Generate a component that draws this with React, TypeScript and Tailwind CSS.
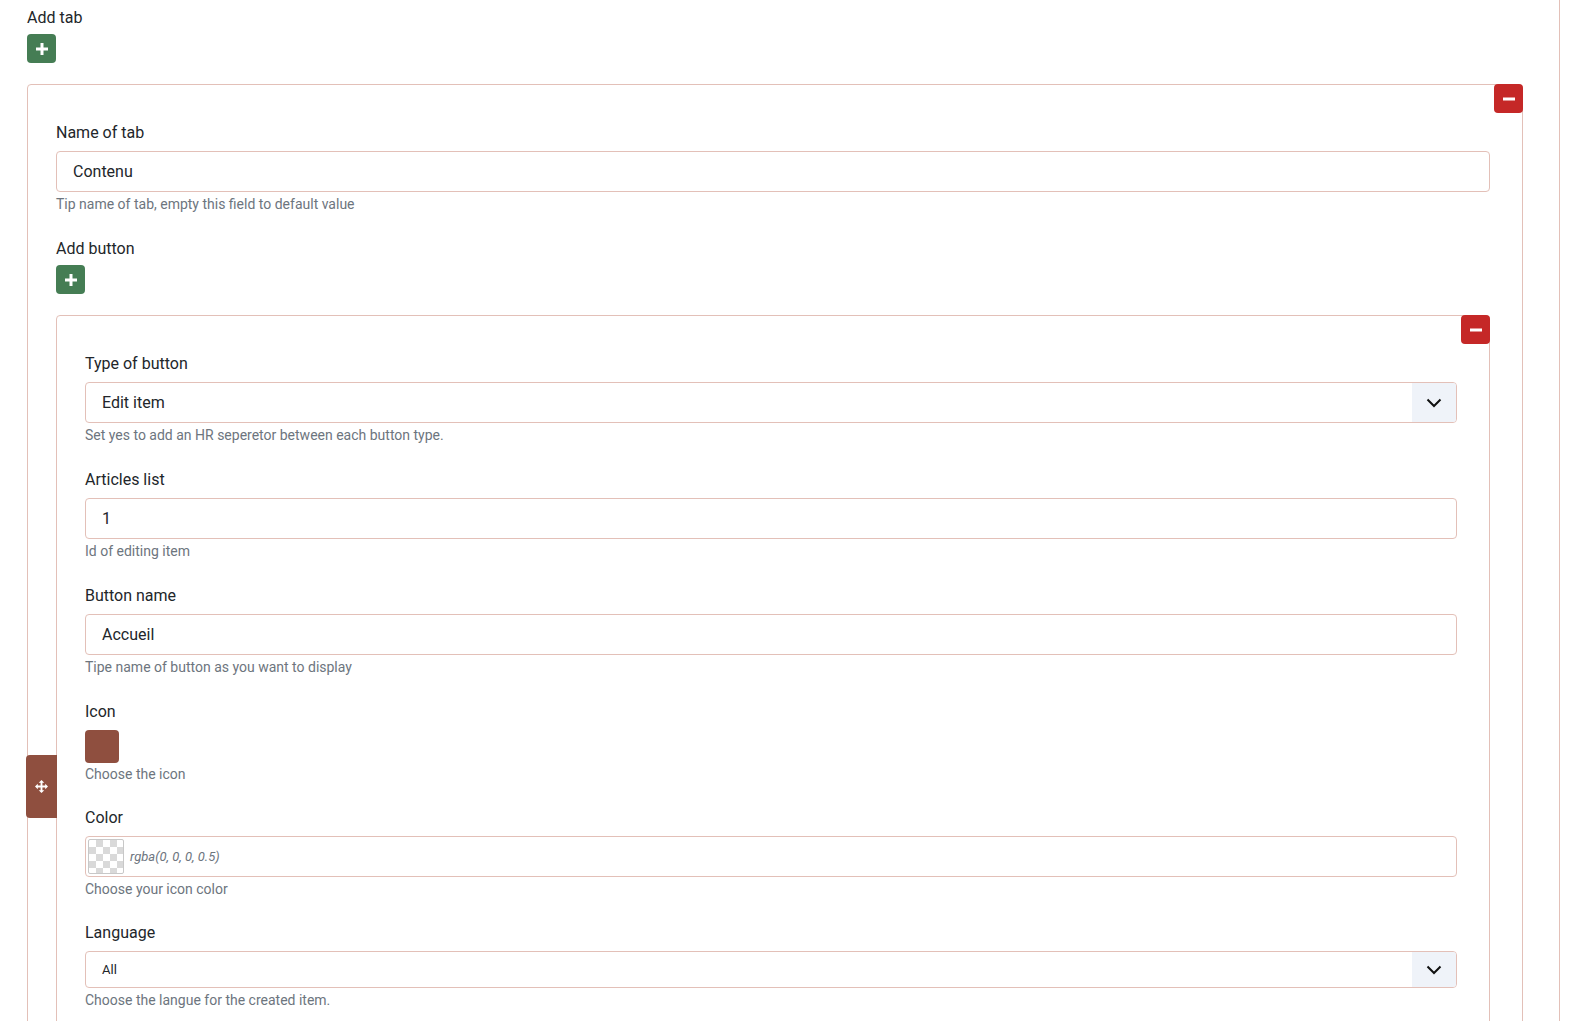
import React from "react";

const Plus = () => (
  <svg width="12" height="12" viewBox="0 0 12 12" aria-hidden="true">
    <rect x="4.5" y="0" width="3" height="12" fill="#fff" />
    <rect x="0" y="4.5" width="12" height="3" fill="#fff" />
  </svg>
);

const Minus = () => (
  <svg width="12" height="12" viewBox="0 0 12 12" aria-hidden="true">
    <rect x="0" y="4.5" width="12" height="3" fill="#fff" />
  </svg>
);

const Chevron = () => (
  <svg width="16" height="10" viewBox="0 0 16 10" aria-hidden="true">
    <path d="M1.5 1.5 L8 8 L14.5 1.5" fill="none" stroke="#111" strokeWidth="2" />
  </svg>
);

const MoveIcon = () => (
  <svg width="13" height="13" viewBox="0 0 14 14" aria-hidden="true">
    <path d="M7 0 L10 3 L8 3 L8 6 L11 6 L11 4 L14 7 L11 10 L11 8 L8 8 L8 11 L10 11 L7 14 L4 11 L6 11 L6 8 L3 8 L3 10 L0 7 L3 4 L3 6 L6 6 L6 3 L4 3 Z" fill="#fff" />
  </svg>
);

const AddBtn = ({ className = "" }: { className?: string }) => (
  <button className={`flex h-[29px] w-[29px] items-center justify-center rounded-[4px] bg-[#457d54] ${className}`}>
    <Plus />
  </button>
);

const RemoveBtn = () => (
  <button className="absolute right-[-1px] top-[-1px] flex h-[29px] w-[29px] items-center justify-center rounded-[4px] bg-[#c52827]">
    <Minus />
  </button>
);

const Label = ({ children }: { children: React.ReactNode }) => (
  <div className="mb-[6px] text-[16px] leading-[24px] text-[#22262a]">{children}</div>
);

const Help = ({ children, tight = false }: { children: React.ReactNode; tight?: boolean }) => (
  <div className={`${tight ? "mt-[1px]" : "mt-[2px]"} text-[14px] leading-[20px] text-[#6d757e]`}>{children}</div>
);

const TextInput = ({ value }: { value: string }) => (
  <div className="flex h-[41px] items-center rounded-[4px] border border-[#e3c0b8] bg-white px-[16px] text-[16px] text-[#22262a]">
    {value}
  </div>
);

const Select = ({ value, small = false }: { value: string; small?: boolean }) => (
  <div
    className={`flex ${small ? "h-[37px] text-[13px]" : "h-[41px] text-[16px]"} items-stretch overflow-hidden rounded-[4px] border border-[#e3c0b8] bg-white text-[#22262a]`}
  >
    <div className="flex flex-1 items-center px-[16px]">{value}</div>
    <div className="flex w-[44px] items-center justify-center bg-[#eff3f9]">
      <Chevron />
    </div>
  </div>
);

export default function App() {
  return (
    <div className="h-[1021px] overflow-hidden bg-white font-['Roboto','Liberation_Sans',sans-serif]">
      <div className="h-full w-[1560px] border-r border-[#e3c0b8] pl-[27px] pr-[36px]">
        <div className="pt-[6px] text-[16px] leading-[24px] text-[#22262a]">Add tab</div>
        <AddBtn className="mt-[4px]" />

        {/* Outer card */}
        <div className="relative mt-[21px] rounded-[4px] border border-[#e3c0b8] pb-[40px] pl-[28px] pr-[32px] pt-[36px]">
          <RemoveBtn />

          <div className="mb-[23px]">
            <Label>Name of tab</Label>
            <TextInput value="Contenu" />
            <Help>Tip name of tab, empty this field to default value</Help>
          </div>

          <div>
            <div className="text-[16px] leading-[24px] text-[#22262a]">Add button</div>
            <AddBtn className="mt-[4px]" />
          </div>

          {/* Inner card */}
          <div className="relative mt-[21px] rounded-[4px] border border-[#e3c0b8] pb-[40px] pl-[28px] pr-[32px] pt-[36px]">
            <RemoveBtn />
            <div className="absolute left-[-31px] top-[439px] flex h-[63px] w-[31px] items-center justify-center rounded-l-[4px] bg-[#8f4f3f]">
              <MoveIcon />
            </div>

            <div className="mb-[23px]">
              <Label>Type of button</Label>
              <Select value="Edit item" />
              <Help>Set yes to add an HR seperetor between each button type.</Help>
            </div>

            <div className="mb-[23px]">
              <Label>Articles list</Label>
              <TextInput value="1" />
              <Help>Id of editing item</Help>
            </div>

            <div className="mb-[23px]">
              <Label>Button name</Label>
              <TextInput value="Accueil" />
              <Help>Tipe name of button as you want to display</Help>
            </div>

            <div className="mb-[22px]">
              <Label>Icon</Label>
              <div className="h-[33px] w-[34px] rounded-[4px] bg-[#8f4f3f]" />
              <Help tight>Choose the icon</Help>
            </div>

            <div className="mb-[22px]">
              <Label>Color</Label>
              <div className="flex h-[41px] items-center rounded-[4px] border border-[#e3c0b8] bg-white pl-[2px]">
                <div className="h-[35px] w-[36px] rounded-[2px] border border-[#c8c8c8] bg-[conic-gradient(#d9d9d9_25%,#ffffff_0_50%,#d9d9d9_0_75%,#ffffff_0)] bg-[length:14px_14px]" />
                <span className="ml-[6px] text-[13px] italic text-[#6d757e]">rgba(0, 0, 0, 0.5)</span>
              </div>
              <Help>Choose your icon color</Help>
            </div>

            <div className="mb-[22px]">
              <Label>Language</Label>
              <Select value="All" small />
              <Help>Choose the langue for the created item.</Help>
            </div>
          </div>
        </div>
      </div>
    </div>
  );
}
